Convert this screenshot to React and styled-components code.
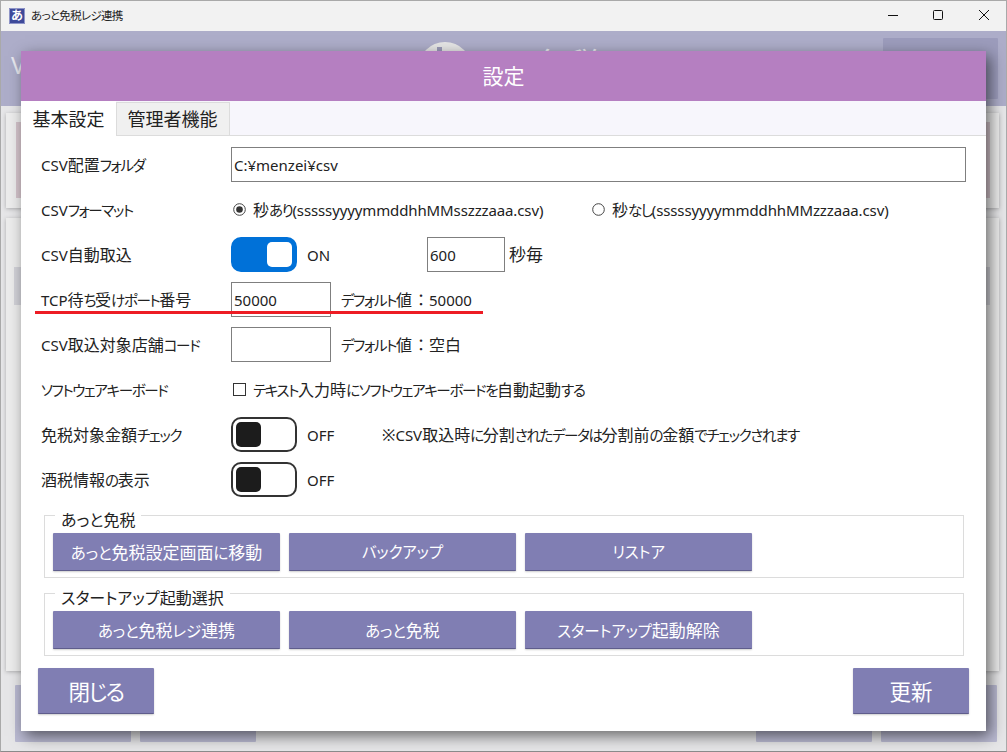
import React from "react";
import styled, { createGlobalStyle } from "styled-components";

const Global = createGlobalStyle`
  html, body { margin: 0; padding: 0; background: #e6e6e8; }
  * { box-sizing: border-box; }
  body {
    font-family: "Noto Sans", "Noto Sans CJK JP", sans-serif;
    font-feature-settings: "palt";
    color: #222;
  }
`;

const KanaRun = styled.span`
  font-size: 0.91em;
  letter-spacing: var(--kana-ls, -1.4px);
`;

const LatinRun = styled.span`
  font-size: 0.9375em;
  letter-spacing: var(--latin-ls, 0);
`;

const WideRun = styled.span`
  margin-left: 1px;
  font-feature-settings: normal;
`;

const Jp = ({ children }) => {
  const parts = children.match(/[\u3040-\u30FF]+|[\x20-\x7E]+|：|[^\u3040-\u30FF\x20-\x7E：]+/g) || [];
  return parts.map((part, i) => {
    if (/^[\u3040-\u30FF]/.test(part)) return <KanaRun key={i}>{part}</KanaRun>;
    if (/^[\x20-\x7E]/.test(part)) return <LatinRun key={i}>{part}</LatinRun>;
    if (part === "：") return <WideRun key={i}>{part}</WideRun>;
    return <span key={i}>{part}</span>;
  });
};

const Frame = styled.div`
  position: relative;
  width: 1007px;
  height: 752px;
  overflow: hidden;
  display: flex;
  flex-direction: column;
  background: #e6e6e8;
  border: 1px solid #a9a9a9;
  border-bottom-color: #8a8a8a;
`;

const TitleBar = styled.header`
  flex: 0 0 30px;
  display: flex;
  align-items: center;
  padding-left: 8px;
  background: #f2f2f2;
`;

const AppIcon = styled.span`
  width: 16px;
  height: 16px;
  margin-right: 6px;
  display: flex;
  align-items: center;
  justify-content: center;
  background: #3e4a9a;
  box-shadow: inset 0 0 0 1px #8f95c8;
  border-radius: 1px;
  color: #fff;
  font-size: 12px;
  font-weight: 700;
  line-height: 1;
`;

const TitleText = styled.span`
  font-size: 11.5px;
  line-height: 16px;
  letter-spacing: -0.7px;
  color: #222;
`;

const WindowControls = styled.div`
  margin-left: auto;
  margin-bottom: 2px;
  display: flex;
  align-items: center;
  gap: 36px;
  padding-right: 17px;
`;

const AppHeader = styled.div`
  flex: 0 0 75px;
  display: flex;
  align-items: flex-start;
  padding: 7px 8px 0 10px;
  background: #adadc9;
  color: #e8e8ee;
`;

const HeaderVersion = styled.span`
  width: 407px;
  padding-top: 12px;
  font-size: 24px;
  line-height: 30px;
`;

const HeaderLogo = styled.span`
  position: relative;
  width: 54px;
  height: 54px;
  margin-top: 4px;
  border-radius: 50%;
  background: #e6e6e6;
`;

const LogoNotch = styled.span`
  position: absolute;
  left: 19px;
  top: 5px;
  width: 5px;
  height: 10px;
  background: #9a9ab8;
`;

const HeaderName = styled.span`
  margin: 5px 0 0 65px;
  font-size: 30px;
  line-height: 40px;
  letter-spacing: 2px;
`;

const HeaderButton = styled.span`
  margin-left: auto;
  width: 115px;
  height: 61px;
  background: #9c9cbc;
  border-radius: 1px;
`;

const PanelArea = styled.div`
  flex: 1;
  display: flex;
  flex-direction: column;
  gap: 10px;
  padding: 7px 7px 14px 5px;
`;

const Panel = styled.div`
  flex: ${(p) => (p.$grow ? 1 : "none")};
  height: ${(p) => p.$h}px;
  padding: ${(p) => p.$pad};
  background: #ececec;
  box-shadow: 0 1px 4px rgba(0, 0, 0, 0.25);
`;

const PanelFill = styled.div`
  height: ${(p) => p.$h}px;
  margin-top: ${(p) => p.$top}px;
  background: ${(p) => p.$bg};
`;

const BottomBar = styled.div`
  flex: 0 0 57px;
  margin-bottom: 9px;
  display: flex;
  gap: 9px;
  padding: 0 9px 0 14px;
`;

const BottomButton = styled.span`
  width: 116px;
  background: #babad2;
  border-radius: 1px;
  &:nth-child(2) {
    margin-right: auto;
  }
`;

const Dialog = styled.section`
  position: absolute;
  left: 20px;
  top: 50px;
  width: 965px;
  height: 680px;
  display: flex;
  flex-direction: column;
  background: #fff;
  box-shadow: 4px 5px 14px rgba(0, 0, 0, 0.55);
`;

const DialogTitle = styled.h1`
  flex: 0 0 50px;
  margin: 0;
  padding-bottom: 2px;
  display: flex;
  align-items: center;
  justify-content: center;
  background: #b57fc1;
  color: #fff;
  font-size: 21px;
  font-weight: 400;
`;

const TabBar = styled.div`
  flex: 0 0 35px;
  display: flex;
  align-items: flex-end;
  background: #f7f6fc;
  border-bottom: 1px solid #dcdcdc;
`;

const Tab = styled.button`
  border: 0;
  font: inherit;
  font-feature-settings: inherit;
  font-size: 18px;
  line-height: 1;
  color: #222;
  ${(p) =>
    p.$active
      ? `
    width: 95px;
    height: 35px;
    margin-bottom: -1px;
    background: #fff;
    padding: 1px 0 0;
  `
      : `
    width: 114px;
    height: 33px;
    background: #f0f0f0;
    border: 1px solid #dcdcdc;
    border-bottom: 0;
    padding: 0 1px 0 0;
  `}
`;

const FormBody = styled.div`
  flex: 1;
  display: flex;
  flex-direction: column;
  gap: 10px;
  padding: 11px 20px 0;
`;

const Row = styled.div`
  position: relative;
  height: 35px;
  display: grid;
  grid-template-columns: 190px 1fr;
  align-items: center;
`;

const Label = styled.label`
  font-size: 16px;
  line-height: 20px;
  white-space: nowrap;
`;

const Controls = styled.div`
  display: flex;
  align-items: center;
  height: 35px;
  font-size: 16px;
  line-height: 20px;
  white-space: nowrap;
`;

const TextBox = styled.input`
  width: ${(p) => (p.$w ? `${p.$w}px` : "100%")};
  height: 35px;
  padding: 0 2px;
  border: 1px solid #7f7f7f;
  border-radius: 0;
  background: #fff;
  font: inherit;
  font-size: 15px;
  color: #222;
  outline: 0;
`;

const Option = styled.span`
  --latin-ls: -0.12px;
  display: inline-flex;
  align-items: center;
  width: ${(p) => (p.$w ? `${p.$w}px` : "auto")};
  padding-left: 2px;
  gap: 7px;
`;

const Switch = styled.span`
  width: 66px;
  height: 35px;
  padding: 3px;
  display: flex;
  justify-content: ${(p) => (p.$on ? "flex-end" : "flex-start")};
  align-items: center;
  border-radius: 10px;
  border: 2px solid ${(p) => (p.$on ? "#0071d8" : "#333")};
  background: ${(p) => (p.$on ? "#0071d8" : "#fff")};
`;

const Knob = styled.span`
  width: 25px;
  height: 25px;
  border-radius: 5px;
  background: ${(p) => (p.$on ? "#fff" : "#1c1c1c")};
`;

const SwitchText = styled.span`
  margin-left: 10px;
  width: ${(p) => p.$w}px;
  font-size: 15px;
`;

const Hint = styled.span`
  margin-left: 10px;
`;

const Unit = styled.span`
  margin-left: 4px;
  font-size: 17px;
`;

const RedLine = styled.span`
  position: absolute;
  left: -6px;
  top: 29px;
  width: 448px;
  height: 3px;
  background: #ed1c24;
`;

const Groups = styled.div`
  display: flex;
  flex-direction: column;
  gap: 15px;
  margin: 8px 2px 0 3px;
`;

const Group = styled.div`
  position: relative;
  height: 63px;
  padding: 17px 8px 0;
  display: flex;
  gap: 9px;
  border: 1px solid #dcdcdc;
`;

const Legend = styled.span`
  position: absolute;
  left: 10px;
  top: -8px;
  padding: 0 6px;
  background: #fff;
  font-size: 16px;
  line-height: 24px;
`;

const ActionButton = styled.button`
  --kana-ls: -0.1px;
  --latin-ls: 0;
  width: 227px;
  height: 38px;
  padding: 0;
  border: 0;
  border-bottom: 1px solid #5f5d8c;
  border-radius: 1px;
  background: #807eb3;
  box-shadow: 0 1px 2px rgba(0, 0, 0, 0.2);
  color: #fff;
  font: inherit;
  font-feature-settings: inherit;
  font-size: 17px;
`;

const Footer = styled.div`
  display: flex;
  justify-content: space-between;
  margin-top: 12px;
  padding: 0 17px 17px;
`;

const FooterButton = styled(ActionButton)`
  width: 116px;
  height: 46px;
  font-size: 21.5px;
  letter-spacing: ${(p) => p.$ls || 0}px;
`;

const CircleMark = ({ checked }) => (
  <svg width="13" height="13" viewBox="0 0 13 13">
    <circle cx="6.5" cy="6.5" r="5.8" fill="#fff" stroke="#444" strokeWidth="1" />
    {checked && <circle cx="6.5" cy="6.5" r="3.3" fill="#333" />}
  </svg>
);

const BoxMark = () => (
  <svg width="13" height="13" viewBox="0 0 13 13">
    <rect x="0.5" y="0.5" width="12" height="12" fill="#fff" stroke="#333" />
  </svg>
);

const Minimize = () => (
  <svg width="10" height="10" viewBox="0 0 10 10" overflow="visible">
    <path d="M1 5.5H11" stroke="#111" />
  </svg>
);
const Maximize = () => (
  <svg width="10" height="10" viewBox="0 0 10 10">
    <rect x="0.5" y="0.5" width="9" height="9" rx="1" fill="none" stroke="#111" />
  </svg>
);
const Close = () => (
  <svg width="10" height="10" viewBox="0 0 10 10">
    <path d="M0 0L10 10M10 0L0 10" stroke="#111" />
  </svg>
);

const ToggleRow = ({ label, on, children }) => (
  <Row>
    <Label>
      <Jp>{label}</Jp>
    </Label>
    <Controls>
      <Switch $on={on}>
        <Knob $on={on} />
      </Switch>
      {children}
    </Controls>
  </Row>
);

const GroupButton = ({ children }) => (
  <ActionButton>
    <Jp>{children}</Jp>
  </ActionButton>
);

export default function App() {
  return (
    <>
      <Global />
      <Frame>
        <TitleBar>
          <AppIcon>あ</AppIcon>
          <TitleText>あっと免税レジ連携</TitleText>
          <WindowControls>
            <Minimize />
            <Maximize />
            <Close />
          </WindowControls>
        </TitleBar>
        <AppHeader>
          <HeaderVersion>V</HeaderVersion>
          <HeaderLogo>
            <LogoNotch />
          </HeaderLogo>
          <HeaderName>免税レジ</HeaderName>
          <HeaderButton />
        </AppHeader>
        <PanelArea>
          <Panel $h={95} $pad="9px 9px 0 10px">
            <PanelFill $h={76} $top={0} $bg="#d4c4cb" />
          </Panel>
          <Panel $grow $pad="0 9px 0 8px">
            <PanelFill $h={38} $top={49} $bg="#d2d2d8" />
          </Panel>
        </PanelArea>
        <BottomBar>
          <BottomButton />
          <BottomButton />
          <BottomButton />
          <BottomButton />
        </BottomBar>

        <Dialog>
          <DialogTitle>設定</DialogTitle>
          <TabBar>
            <Tab $active>基本設定</Tab>
            <Tab>管理者機能</Tab>
          </TabBar>
          <FormBody>
            <Row>
              <Label>
                <Jp>CSV配置フォルダ</Jp>
              </Label>
              <TextBox defaultValue="C:¥menzei¥csv" />
            </Row>
            <Row>
              <Label>
                <Jp>CSVフォーマット</Jp>
              </Label>
              <Controls>
                <Option $w={359}>
                  <CircleMark checked />
                  <span>
                    <Jp>秒あり(sssssyyyymmddhhMMsszzzaaa.csv)</Jp>
                  </span>
                </Option>
                <Option>
                  <CircleMark />
                  <span>
                    <Jp>秒なし(sssssyyyymmddhhMMzzzaaa.csv)</Jp>
                  </span>
                </Option>
              </Controls>
            </Row>
            <ToggleRow label="CSV自動取込" on>
              <SwitchText $w={120}>ON</SwitchText>
              <TextBox $w={78} defaultValue="600" />
              <Unit>秒毎</Unit>
            </ToggleRow>
            <Row>
              <Label>
                <Jp>TCP待ち受けポート番号</Jp>
              </Label>
              <Controls>
                <TextBox $w={100} defaultValue="50000" />
                <Hint>
                  <Jp>デフォルト値：50000</Jp>
                </Hint>
              </Controls>
              <RedLine />
            </Row>
            <Row>
              <Label>
                <Jp>CSV取込対象店舗コード</Jp>
              </Label>
              <Controls>
                <TextBox $w={100} defaultValue="" />
                <Hint>
                  <Jp>デフォルト値：空白</Jp>
                </Hint>
              </Controls>
            </Row>
            <Row>
              <Label>
                <Jp>ソフトウェアキーボード</Jp>
              </Label>
              <Controls>
                <Option>
                  <BoxMark />
                  <span>
                    <Jp>テキスト入力時にソフトウェアキーボードを自動起動する</Jp>
                  </span>
                </Option>
              </Controls>
            </Row>
            <ToggleRow label="免税対象金額チェック">
              <SwitchText $w={75}>OFF</SwitchText>
              <span>
                <Jp>※CSV取込時に分割されたデータは分割前の金額でチェックされます</Jp>
              </span>
            </ToggleRow>
            <ToggleRow label="酒税情報の表示">
              <SwitchText $w={75}>OFF</SwitchText>
            </ToggleRow>
            <Groups>
              <Group>
                <Legend>あっと免税</Legend>
                <GroupButton>あっと免税設定画面に移動</GroupButton>
                <GroupButton>バックアップ</GroupButton>
                <GroupButton>リストア</GroupButton>
              </Group>
              <Group>
                <Legend>スタートアップ起動選択</Legend>
                <GroupButton>あっと免税レジ連携</GroupButton>
                <GroupButton>あっと免税</GroupButton>
                <GroupButton>スタートアップ起動解除</GroupButton>
              </Group>
            </Groups>
          </FormBody>
          <Footer>
            <FooterButton $ls={-1.6}>閉じる</FooterButton>
            <FooterButton>更新</FooterButton>
          </Footer>
        </Dialog>
      </Frame>
    </>
  );
}
